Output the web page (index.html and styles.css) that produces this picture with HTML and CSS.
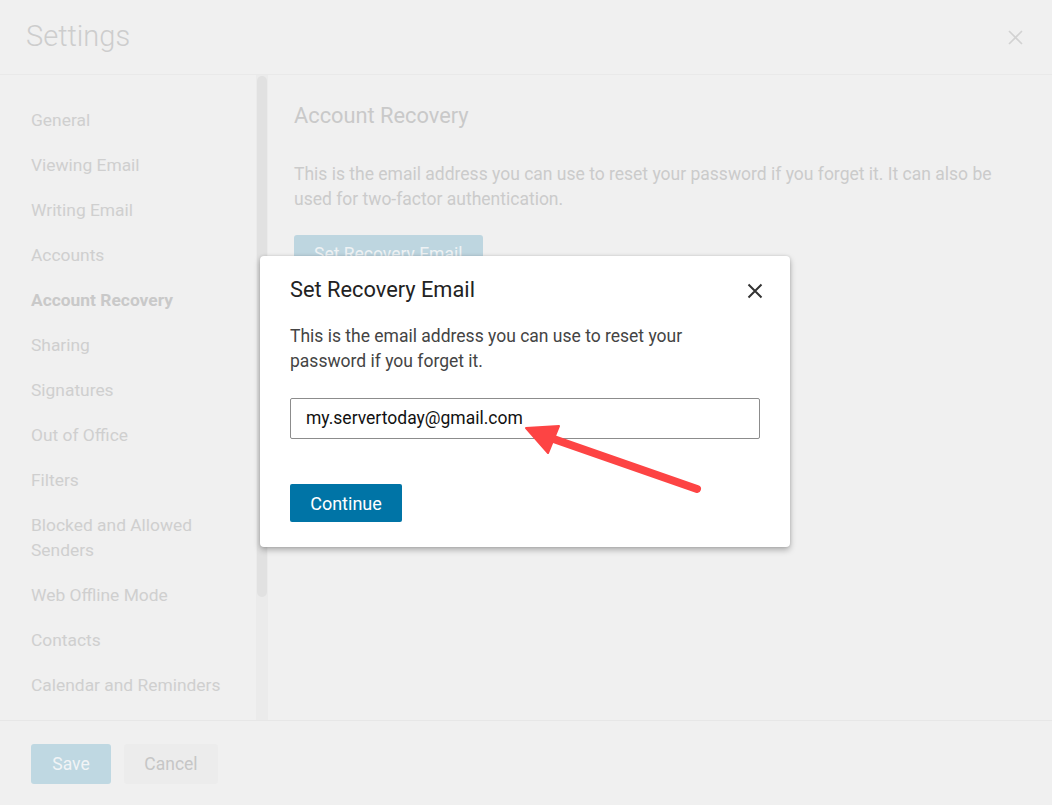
FILE: index.html
```html
<!DOCTYPE html>
<html>
<head>
<meta charset="utf-8">
<link rel="stylesheet" href="styles.css">
</head>
<body>
<div class="settings">
  <header class="top">
    <h1 class="top-title">Settings</h1>
    <span class="top-close">
      <svg width="15" height="15" viewBox="0 0 15 15"><path d="M1 1L14 14M14 1L1 14" stroke="#d2d2d2" stroke-width="1.6" fill="none"/></svg>
    </span>
  </header>
  <div class="middle">
    <nav class="side">
      <ul class="nav">
        <li>General</li>
        <li>Viewing Email</li>
        <li>Writing Email</li>
        <li>Accounts</li>
        <li class="active">Account Recovery</li>
        <li>Sharing</li>
        <li>Signatures</li>
        <li>Out of Office</li>
        <li>Filters</li>
        <li>Blocked and Allowed Senders</li>
        <li>Web Offline Mode</li>
        <li>Contacts</li>
        <li>Calendar and Reminders</li>
      </ul>
    </nav>
    <div class="scroll"><div class="thumb"></div></div>
    <main class="content">
      <h2 class="content-title">Account Recovery</h2>
      <p class="content-text">This is the email address you can use to reset your password if you forget it. It can also be used for two-factor authentication.</p>
      <button class="btn-faded">Set Recovery Email</button>
    </main>
  </div>
  <footer class="bottom">
    <button class="btn-save">Save</button>
    <button class="btn-cancel">Cancel</button>
  </footer>
</div>

<div class="modal">
  <div class="modal-head">
    <h3 class="modal-title">Set Recovery Email</h3>
    <svg class="modal-close" width="16" height="16" viewBox="0 0 16 16"><path d="M1.5 1.5L14.5 14.5M14.5 1.5L1.5 14.5" stroke="#333" stroke-width="2" fill="none"/></svg>
  </div>
  <p class="modal-text">This is the email address you can use to reset your password if you forget it.</p>
  <div class="field">my.servertoday@gmail.com</div>
  <button class="btn-continue">Continue</button>
</div>

<svg class="arrow" width="1052" height="805" viewBox="0 0 1052 805">
  <line x1="697" y1="489" x2="545" y2="436" stroke="#fd4444" stroke-width="8" stroke-linecap="round"/>
  <polygon points="526,428 559,426 548,453" fill="#fd4444" stroke="#fd4444" stroke-width="2" stroke-linejoin="round"/>
</svg>
</body>
</html>
```

FILE: styles.css
```css
* { box-sizing: border-box; }
html, body { margin: 0; padding: 0; }
body {
  width: 1052px;
  height: 805px;
  overflow: hidden;
  background: #f0f0f0;
  font-family: Roboto, "Liberation Sans", sans-serif;
  position: relative;
}
.settings {
  display: flex;
  flex-direction: column;
  height: 805px;
}
.top {
  height: 75px;
  flex: none;
  display: flex;
  align-items: center;
  justify-content: space-between;
  padding: 0 29px 0 26px;
  border-bottom: 1px solid #e9e9e9;
}
.top-title {
  margin: 0;
  font-weight: 300;
  font-size: 29px;
  color: #cdcdcd;
  position: relative;
  top: -1px;
}
.top-close { display: flex; }
.middle {
  flex: 1;
  display: flex;
  min-height: 0;
}
.side {
  width: 256px;
  flex: none;
  padding: 0 0 0 31px;
}
.nav {
  list-style: none;
  margin: 0;
  padding: 33px 0 0;
}
.nav li {
  font-size: 17.4px;
  line-height: 25px;
  color: #cfcfcf;
  padding: 0 20px 20px 0;
}
.nav li.active { font-weight: 700; color: #c9c9c9; }
.scroll {
  width: 12px;
  flex: none;
  background: #ebebeb;
  padding: 1px 1px 0;
}
.thumb {
  height: 521px;
  border-radius: 5px;
  background: #e1e1e1;
}
.content {
  flex: 1;
  padding: 28px 40px 0 26px;
}
.content-title {
  margin: 0;
  font-weight: 400;
  font-size: 21.8px;
  line-height: 26px;
  color: #c9c9c9;
}
.content-text {
  margin: 33px 0 0;
  font-size: 17.5px;
  line-height: 25px;
  color: #cbcbcb;
}
.btn-faded {
  margin-top: 23px;
  height: 38px;
  padding: 0 20px;
  border: 0;
  border-radius: 3px;
  background: #bed6e0;
  color: #eef2f4;
  font-family: inherit;
  font-size: 17.5px;
}
.bottom {
  height: 85px;
  flex: none;
  border-top: 1px solid #e7e7e7;
  display: flex;
  align-items: flex-start;
  gap: 13px;
  padding: 23px 0 0 31px;
}
.btn-save, .btn-cancel {
  height: 40px;
  border: 0;
  border-radius: 3px;
  font-family: inherit;
  font-size: 17.5px;
}
.btn-save {
  width: 80px;
  background: #bfd8e2;
  color: #f1f4f6;
}
.btn-cancel {
  width: 94px;
  background: #ececec;
  color: #c6c6c6;
}
.modal {
  position: absolute;
  left: 260px;
  top: 256px;
  width: 530px;
  height: 291px;
  background: #fff;
  border-radius: 4px;
  box-shadow: 0 3px 6px rgba(0,0,0,0.28), 0 0 3px rgba(0,0,0,0.12);
  padding: 21px 30px 24px;
}
.modal-head {
  display: flex;
  justify-content: space-between;
  align-items: center;
}
.modal-title {
  margin: 0;
  font-weight: 400;
  font-size: 21.8px;
  line-height: 26px;
  color: #222;
}
.modal-close { margin-right: -3px; margin-top: 1px; }
.modal-text {
  margin: 21px 0 0;
  font-size: 17.5px;
  line-height: 25px;
  color: #444;
  padding-right: 40px;
}
.field {
  margin-top: 24px;
  height: 41px;
  border: 1px solid #8c8c8c;
  border-radius: 2px;
  padding: 1px 15px 0;
  font-size: 17.5px;
  line-height: 37px;
  color: #111;
}
.btn-continue {
  margin-top: 45px;
  height: 38px;
  width: 112px;
  border: 0;
  border-radius: 2px;
  background: #0074a6;
  color: #fff;
  font-family: inherit;
  font-size: 18px;
}
.arrow {
  position: absolute;
  left: 0;
  top: 0;
  pointer-events: none;
}
```
